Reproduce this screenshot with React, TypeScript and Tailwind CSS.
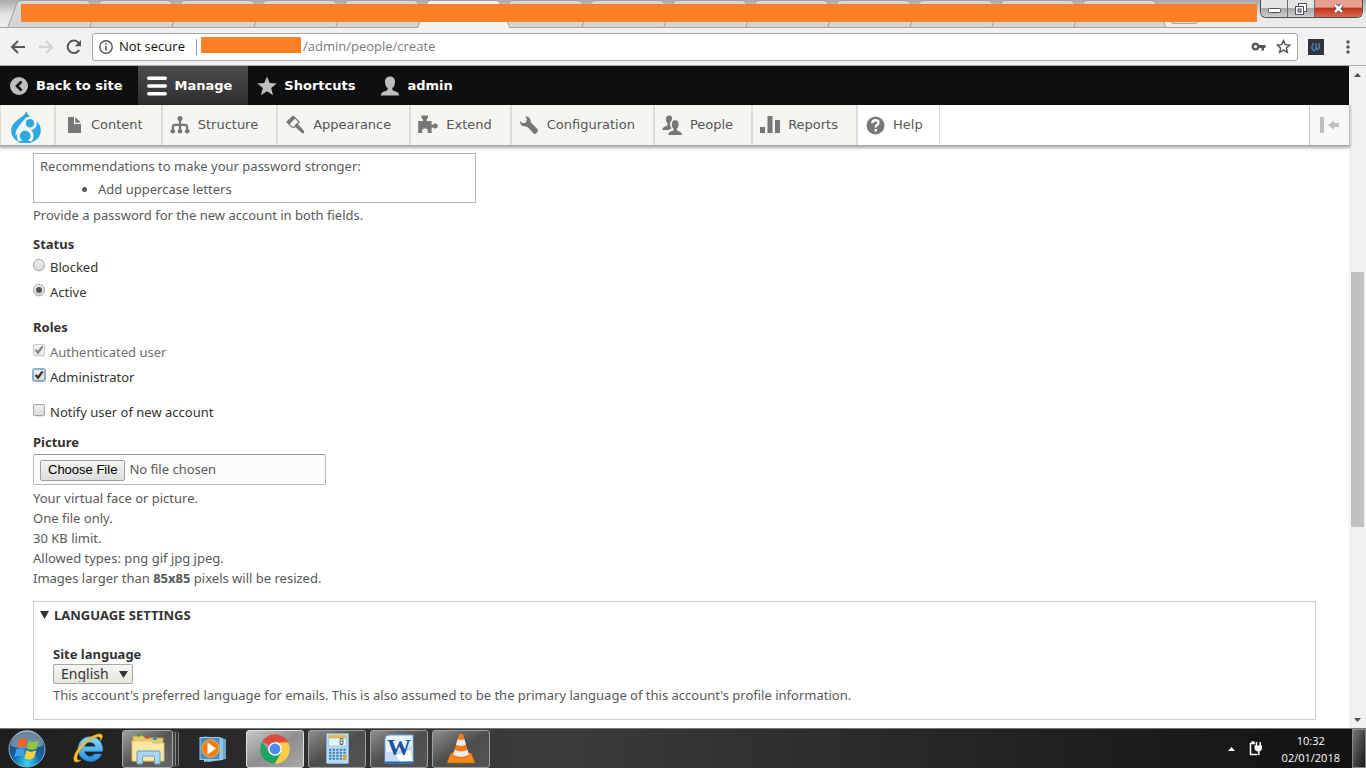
import type { ReactNode } from "react";

const tabs = Array.from({ length: 14 }, (_, i) => i);

function Tab({ active }: { active: boolean }) {
  return (
    <svg width="94" height="28" viewBox="0 0 94 28" className={active ? "relative z-10 -mr-3 shrink-0" : "-mr-3 shrink-0"} aria-hidden="true">
      <path
        d="M0.5 28 L10 3 Q11 0.5 14 0.5 H79 Q82 0.5 83 3 L93 28"
        fill={active ? "#f2f2f2" : "#d6d6d6"}
        stroke="#a0a0a0"
      />
      {!active && <path d="M0 28 H94" stroke="#9b9b9b" strokeWidth="2" />}
    </svg>
  );
}

function TitleBar() {
  return (
    <div className="relative flex h-7 shrink-0 overflow-hidden bg-linear-to-b from-[#a9a9a9] via-[#e4e4e4] to-[#f0f0f0] pl-[7px]">
      {tabs.map((i) => (
        <Tab key={i} active={i === 5} />
      ))}
      <div className="ml-4 mt-4 h-2 w-7 -skew-x-12 rounded-sm border border-[#aaa] bg-[#d8d8d8]" />
      <div className="absolute inset-x-0 bottom-0 h-px bg-[#a3a3a3]" />
      <div className="absolute left-[21px] right-[109px] top-1 z-20 h-[18px] bg-[#ff7f27]" />
      <div className="absolute right-[3px] top-0 z-20 flex h-[18px] overflow-hidden rounded-b-md border border-t-0 border-[#4a4f58]">
        <button aria-label="Minimize" className="flex w-[27px] items-center justify-center border-r border-[#6b6b6b] bg-linear-to-b from-[#e4e4e4] from-45% via-[#a9a9a9] via-50% to-[#cfcfcf]">
          <svg width="13" height="6" viewBox="0 0 13 6" className="mt-1"><rect x="0.5" y="0.5" width="12" height="4" rx="1" fill="#fff" stroke="#4b5160" /></svg>
        </button>
        <button aria-label="Restore" className="flex w-[27px] items-center justify-center border-r border-[#6b6b6b] bg-linear-to-b from-[#e4e4e4] from-45% via-[#a9a9a9] via-50% to-[#cfcfcf]">
          <svg width="12" height="12" viewBox="0 0 12 12" fill="#fff" stroke="#4b5160"><rect x="3.5" y="0.5" width="8" height="8" /><rect x="0.5" y="3.5" width="8" height="8" /><rect x="3" y="6" width="3" height="3" fill="#bbb" /></svg>
        </button>
        <button aria-label="Close" className="flex w-[47px] items-center justify-center bg-linear-to-b from-[#e6a093] from-40% via-[#c2331f] via-50% to-[#d9694c]">
          <svg width="13" height="11" viewBox="0 0 13 11"><path d="M3 2 L10 9 M10 2 L3 9" stroke="#4b3a44" strokeWidth="4.5" /><path d="M3 2 L10 9 M10 2 L3 9" stroke="#fff" strokeWidth="2.6" /></svg>
        </button>
      </div>
    </div>
  );
}

function AddressBar() {
  return (
    <div className="flex h-[38px] shrink-0 items-center border-b border-[#aaa] bg-[#f2f2f2] pl-2 pr-4">
      <button aria-label="Back" className="flex w-7 shrink-0 pl-[2px]">
        <svg width="16" height="16" viewBox="0 0 16 16" fill="none" stroke="#555" strokeWidth="2"><path d="M15 8 H2.5 M8 2 L2 8 L8 14" /></svg>
      </button>
      <button aria-label="Forward" className="flex w-7 shrink-0 pl-[2px]">
        <svg width="16" height="16" viewBox="0 0 16 16" fill="none" stroke="#d2d2d2" strokeWidth="2"><path d="M1 8 H13.5 M8 2 L14 8 L8 14" /></svg>
      </button>
      <button aria-label="Reload" className="flex w-7 shrink-0 pl-[2px]">
        <svg width="16" height="16" viewBox="0 0 16 16"><path d="M13.2 11 A6.2 6.2 0 1 1 12.6 3.8" fill="none" stroke="#555" strokeWidth="2" /><path d="M15 1 V7.2 H8.8 Z" fill="#555" /></svg>
      </button>
      <div className="flex h-7 min-w-0 flex-1 items-center rounded-[3px] border border-[#a9a9a9] bg-white pl-[6px] pr-[6px] font-['Open_Sans',sans-serif] text-[13px] text-[#111]">
        <svg width="14" height="14" viewBox="0 0 14 14" className="mr-[6px] shrink-0"><circle cx="7" cy="7" r="6.2" fill="none" stroke="#555" strokeWidth="1.4" /><path d="M7 6 V10.6 M7 3.2 V4.8" stroke="#555" strokeWidth="1.6" /></svg>
        <span className="shrink-0">Not secure</span>
        <span className="ml-[11px] h-4 w-px shrink-0 bg-[#999]" />
        <span className="mb-1 ml-1 h-4 w-[100px] shrink-0 bg-[#ff7f27]" />
        <input aria-label="Address" defaultValue="/admin/people/create" className="ml-[2px] min-w-0 flex-1 bg-transparent text-[#7b7b7b] outline-none" />
        <button aria-label="Saved passwords" className="mr-[10px] shrink-0">
          <svg width="15" height="10" viewBox="0 0 15 10"><path fillRule="evenodd" d="M4.5 0.5 A4 4 0 1 0 8.3 6 H10.5 V8.5 H13 V6 H14.5 V3 H8.3 A4 4 0 0 0 4.5 0.5 Z M4.5 3 A1.6 1.6 0 1 1 4.49 3 Z" fill="#555" /></svg>
        </button>
        <button aria-label="Bookmark this page" className="shrink-0">
          <svg width="15" height="15" viewBox="0 0 24 24" fill="none" stroke="#555" strokeWidth="2.3"><path d="M12 2.5 L14.9 9 L22 9.7 L16.6 14.4 L18.2 21.4 L12 17.7 L5.8 21.4 L7.4 14.4 L2 9.7 L9.1 9 Z" /></svg>
        </button>
      </div>
      <button aria-label="Extension" className="ml-[10px] shrink-0">
        <svg width="16" height="16" viewBox="0 0 16 16"><rect width="16" height="16" fill="#34323f" /><path d="M5.5 4 Q2.5 9 5.5 11.5 Q8 12 8 8 V4 M8 8 Q8 11 10.5 10 Q12 8 11 4" fill="none" stroke="#4a86b5" strokeWidth="1.4" /></svg>
      </button>
      <button aria-label="Browser menu" className="ml-[22px] shrink-0">
        <svg width="4" height="14" viewBox="0 0 4 14" fill="#555"><circle cx="2" cy="2" r="1.7" /><circle cx="2" cy="7" r="1.7" /><circle cx="2" cy="12" r="1.7" /></svg>
      </button>
    </div>
  );
}

function AdminBar() {
  return (
    <nav aria-label="Administration" className="flex h-[39px] bg-[#0f0f0f] font-['DejaVu_Sans',sans-serif] text-[13px] font-bold text-white">
      <a href="#back" className="flex items-center gap-2 pl-[10px] pr-4">
        <svg width="18" height="18" viewBox="0 0 18 18"><circle cx="9" cy="9" r="9" fill="#bebebe" /><path d="M11.5 4.5 L7 9 L11.5 13.5" fill="none" stroke="#0f0f0f" strokeWidth="2.6" /></svg>
        Back to site
      </a>
      <a href="#manage" className="flex items-center gap-[7px] bg-linear-to-b from-[#4c4c4c] to-[#2f2f2f] pl-[9px] pr-4">
        <svg width="20" height="20" viewBox="0 0 20 20" stroke="#fff" strokeWidth="3.4" strokeLinecap="round"><path d="M1.7 2.2 H18.3 M1.7 10 H18.3 M1.7 17.8 H18.3" /></svg>
        Manage
      </a>
      <a href="#shortcuts" className="flex items-center gap-[7px] pl-[9px] pr-4">
        <svg width="20" height="20" viewBox="0 0 20 20"><path d="M10 0.5 L12.7 7 L19.7 7.4 L14.2 11.9 L16 19.2 L10 15.2 L4 19.2 L5.8 11.9 L0.3 7.4 L7.3 7 Z" fill="#bebebe" /></svg>
        Shortcuts
      </a>
      <a href="#admin" className="flex items-center gap-[7px] pl-[9px] pr-4">
        <svg width="20" height="20" viewBox="0 0 20 20" fill="#bebebe"><path d="M10 0.5 C6.6 0.5 5 2.8 5 6 C5 8.6 6 10.7 7.7 12 C8 13.5 7.4 14.4 5.6 15 C2.6 15.9 1 16.8 0.8 19.5 H19.2 C19 16.8 17.4 15.9 14.4 15 C12.6 14.4 12 13.5 12.3 12 C14 10.7 15 8.6 15 6 C15 2.8 13.4 0.5 10 0.5 Z" /></svg>
        admin
      </a>
    </nav>
  );
}

const menu: { label: string; icon: ReactNode }[] = [
  { label: "Content", icon: <path d="M5 2 H11 V9 H18 V18 H5 Z M12.3 2 L18 7.7 H12.3 Z" /> },
  {
    label: "Structure",
    icon: (
      <>
        <path d="M8.9 4 H11.1 V8.8 H15 Q18.2 8.8 18.2 12 V16 H16 V12.3 Q16 11 14.6 11 H11.1 V16 H8.9 V11 H5.4 Q4 11 4 12.3 V16 H1.8 V12 Q1.8 8.8 5 8.8 H8.9 Z" />
        <circle cx="10" cy="3.6" r="2.5" /><circle cx="2.8" cy="16.3" r="2.3" /><circle cx="10" cy="16.3" r="2.3" /><circle cx="17.2" cy="16.3" r="2.3" />
      </>
    ),
  },
  {
    label: "Appearance",
    icon: (
      <>
        <path d="M1 7 L8 0.5 L10.5 2.4 L3.6 9.4 Z" />
        <path d="M3.8 9 L10 2.8 L14.2 7 L8.8 12.6 L6.5 11.6 Z" fill="none" stroke="#777" strokeWidth="1.2" />
        <path d="M10.4 9.4 L12 8 L19.3 16.2 Q19.5 18.4 17.4 18.4 L9.8 11.6 Z" />
      </>
    ),
  },
  {
    label: "Extend",
    icon: <path d="M3.4 0.6 H10 V3 L8.6 4.5 V6 H13.6 V9.7 H15.4 C16 8 19.8 8 19.8 11 C19.8 14 16 14 15.4 12.5 H13.6 V18 H9.6 C10.6 15 9.5 13.5 7 13.5 C4.5 13.5 3.4 15 4.4 18 H0.2 V6 H5 V4.5 L3.4 3 Z" />,
  },
  {
    label: "Configuration",
    icon: <path d="M6.2 1 C8.8 0.4 11.6 2.4 11.6 5.4 Q11.5 6.5 12.2 7.2 L18.4 13.4 Q19.6 14.8 18.4 16.6 L17.4 17.7 Q15.9 19 14.4 17.8 L8.5 11.6 Q7.8 10.9 6.4 11 C3 11.2 0.8 8.6 1 5.6 L3.6 7.7 L7 7 L7.8 3.4 Z" transform="translate(0 0.5)" />,
  },
  {
    label: "People",
    icon: (
      <>
        <path d="M7.2 0.5 C4.8 0.5 4 2 4 4.2 C4 6.4 4.8 8 5.6 8.8 C5.8 10.2 5.3 10.7 3.6 11.2 C1.4 12 0.4 13 0.3 15 H6.5 C7.4 14 9 13.6 9.8 13.2 C7.5 11 7.6 7.5 9.6 5.4 C10.8 3 10.4 0.5 7.2 0.5 Z" />
        <path d="M13.2 5.2 C10.6 5.2 9.8 7 9.8 9.2 C9.8 11.2 10.6 12.8 11.6 13.7 C11.8 15.2 11.3 15.8 9.6 16.3 C7.5 17 6.4 17.8 6.3 20 H20 C19.9 17.8 18.8 17 16.7 16.3 C15 15.8 14.6 15.2 14.8 13.7 C15.8 12.8 16.6 11.2 16.6 9.2 C16.6 7 15.8 5.2 13.2 5.2 Z" />
      </>
    ),
  },
  { label: "Reports", icon: <path d="M0 12 H5 V18 H0 Z M7.5 1 H12.5 V18 H7.5 Z M15 5 H20 V18 H15 Z" /> },
  {
    label: "Help",
    icon: (
      <>
        <circle cx="10.5" cy="10.5" r="9" />
        <path d="M7.3 8.1 Q7.5 5.3 10.5 5.3 Q13.5 5.3 13.5 7.7 Q13.5 9.1 11.7 10.1 Q10.7 10.8 10.7 12.5 M10.7 13.9 V16.5" fill="none" stroke="#fff" strokeWidth="2.4" />
      </>
    ),
  },
];

function MenuBar() {
  return (
    <nav aria-label="Manage" className="relative flex h-[41px] border-b border-[#a6a6a6] bg-white font-['DejaVu_Sans',sans-serif] text-[13px] text-[#565656] shadow-[0_1px_3px_1px_rgba(0,0,0,0.33)]">
      <a href="#home" aria-label="Home" className="flex w-[56px] items-center border-x border-r-2 border-[#dcdcdc] bg-[#f5f5f2] pl-[10px]">
        <svg width="30" height="32" viewBox="0 0 30 32" className="mt-1">
          <path d="M15.3 0 C14.8 3.2 12 5 8.4 7.5 C4 10.5 0.2 14 0.2 20 C0.2 27 6.5 32 15 32 C23.5 32 29.8 27 29.8 19.5 C29.8 14 26.8 10.6 23 8.2 C19.5 5.8 16.6 4 15.3 0 Z" fill="#2ba9e0" />
          <path d="M12.4 9 C9.5 14 4.5 17 4.4 25 L8 20 L14 17.4 Z" fill="#f5f5f2" />
          <circle cx="19" cy="12.3" r="5.6" fill="#2ba9e0" stroke="#f5f5f2" strokeWidth="2.6" />
          <circle cx="14.2" cy="25" r="6.9" fill="#2ba9e0" stroke="#f5f5f2" strokeWidth="3" />
          <path d="M13 18.4 L15 16.5 L20 19.4 L19 21 Z" fill="#f5f5f2" />
          <path d="M7 30.6 Q14 28.6 21 30.6 L19.5 32 H9 Z" fill="#2ba9e0" />
        </svg>
      </a>
      {menu.map((m) => (
        <a key={m.label} href={`#${m.label.toLowerCase()}`} className="flex items-center gap-2 border-r-2 border-[#dcdcdc] bg-[#f5f5f2] pl-[7px] pr-[18px] last-of-type:border-r last-of-type:bg-white last-of-type:pr-4">
          <svg width="20" height="20" viewBox="0 0 20 20" fill="#777" className="shrink-0">{m.icon}</svg>
          {m.label}
        </a>
      ))}
      <button aria-label="Vertical orientation" className="ml-auto flex w-10 items-center border-l border-[#c8c8c8] bg-[#f6f8f5] pl-[10px]">
        <svg width="20" height="16" viewBox="0 0 20 16" fill="#bfbfbf"><path d="M0 0 H4 V16 H0 Z M8 8 L14 3.5 V6 H19 V10 H14 V12.5 Z" /></svg>
      </button>
    </nav>
  );
}

const boxBase =
  "peer size-3 shrink-0 appearance-none border border-[#a3a3a3] bg-linear-to-b from-[#eeeeee] to-[#dcdcdc] shadow-[0_1px_1px_rgba(0,0,0,0.1)] outline-none";

function Choice({ id, label, type, name, checked, disabled, focused }: { id: string; label: string; type: "radio" | "checkbox"; name?: string; checked?: boolean; disabled?: boolean; focused?: boolean }) {
  return (
    <div className="flex h-[25px] items-center gap-[5px]">
      <span className={disabled ? "relative mb-1 flex opacity-60" : "relative mb-1 flex"}>
        <input
          id={id}
          type={type}
          name={name}
          defaultChecked={checked}
          disabled={disabled}
          className={`${boxBase} ${type === "radio" ? "rounded-full" : "rounded-xs"} ${focused ? "ring-1 ring-[#7fb4f0]" : ""}`}
        />
        {type === "radio" ? (
          <span className="pointer-events-none absolute inset-[3px] hidden rounded-full bg-[#555] peer-checked:block" />
        ) : (
          <svg viewBox="0 0 12 12" className="pointer-events-none absolute inset-0 hidden peer-checked:block" fill="none" stroke="#333" strokeWidth="2.3">
            <path d="M2.6 6 L5 8.6 L9.6 2.4" />
          </svg>
        )}
      </span>
      <label htmlFor={id} className={disabled ? "text-[#6f6f6f]" : ""}>{label}</label>
    </div>
  );
}

function Content() {
  return (
    <main className="flex-1 bg-white pb-2 pl-[33px] pr-[33px] pt-[7px] font-['Noto_Sans',sans-serif] text-[13px] leading-5 text-[#333]">
      <div className="max-w-[443px] border border-[#b5b5b5] px-[6px] pb-[3px] pt-[2px] text-[#595959]">
        <p>Recommendations to make your password stronger:</p>
        <ul className="ml-[58px] mt-[3px] list-disc">
          <li>Add uppercase letters</li>
        </ul>
      </div>
      <p className="mt-[2px] text-[#595959]">Provide a password for the new account in both fields.</p>

      <fieldset className="mt-[9px]">
        <legend className="font-bold">Status</legend>
        <Choice id="blocked" label="Blocked" type="radio" name="status" />
        <Choice id="active" label="Active" type="radio" name="status" checked />
      </fieldset>
      <fieldset className="mt-[13px]">
        <legend className="mb-[2px] font-bold">Roles</legend>
        <Choice id="authenticated" label="Authenticated user" type="checkbox" checked disabled />
        <Choice id="administrator" label="Administrator" type="checkbox" checked focused />
      </fieldset>
      <div className="mt-[10px]">
        <Choice id="notify" label="Notify user of new account" type="checkbox" />
      </div>

      <div className="mt-2">
        <label htmlFor="picture" className="block font-bold">Picture</label>
        <input
          id="picture"
          type="file"
          className="mt-[2px] block h-[31px] w-[293px] rounded-xs border border-[#b8b8b8] border-t-[#999] bg-[#fcfcfa] px-[6px] py-1 text-[13px] leading-5 text-[#595959] file:mr-1 file:h-[21px] file:rounded-[2px] file:border file:border-solid file:border-[#a0a0a0] file:bg-linear-to-b file:from-[#f4f4f4] file:to-[#dddddd] file:px-[7px] file:py-0 file:font-['Liberation_Sans',sans-serif] file:text-[13px] file:leading-[18px] file:text-black"
        />
        <div className="mt-[3px] text-[#595959]">
          <p>Your virtual face or picture.</p>
          <p>One file only.</p>
          <p>30 KB limit.</p>
          <p>Allowed types: png gif jpg jpeg.</p>
          <p>Images larger than <strong>85x85</strong> pixels will be resized.</p>
        </div>
      </div>

      <details open className="mt-[13px] border border-[#ccc]">
        <summary className="flex list-none items-center gap-[5px] px-[6px] pt-[3px] font-bold uppercase">
          <svg width="9" height="8" viewBox="0 0 9 8"><path d="M0 0 H9 L4.5 8 Z" fill="#333" /></svg>
          Language settings
        </summary>
        <div className="px-[19px] pb-[14px] pt-[19px]">
          <label htmlFor="language" className="block font-bold">Site language</label>
          <span className="relative inline-flex align-top">
            <select id="language" className="h-5 w-20 appearance-none rounded-[2px] border border-[#a6a6a6] bg-linear-to-b from-[#f6f6f3] to-[#e7e7df] pb-px pl-[7px] text-sm leading-[17px] text-[#333]">
              <option>English</option>
            </select>
            <svg width="9" height="7" viewBox="0 0 9 7" className="pointer-events-none absolute right-[5px] top-[7px]"><path d="M0 0 H9 L4.5 7 Z" fill="#333" /></svg>
          </span>
          <p className="mt-[1px] text-[#595959]">
            This account's preferred language for emails. This is also assumed to be the primary language of this account's profile information.
          </p>
        </div>
      </details>
    </main>
  );
}

function Scrollbar() {
  return (
    <div className="flex w-[17px] shrink-0 flex-col items-center bg-[#f1f1f1]">
      <button aria-label="Scroll up" className="flex h-[17px] w-full items-center justify-center">
        <svg width="7" height="4" viewBox="0 0 7 4"><path d="M0 4 L3.5 0 L7 4 Z" fill="#505050" /></svg>
      </button>
      <div className="grow-[189]" />
      <div className="w-[13px] grow-[255] bg-[#c1c1c1]" />
      <div className="grow-[184]" />
      <button aria-label="Scroll down" className="flex h-[17px] w-full items-center justify-center">
        <svg width="7" height="4" viewBox="0 0 7 4"><path d="M0 0 L3.5 4 L7 0 Z" fill="#505050" /></svg>
      </button>
    </div>
  );
}

function TaskButton({ label, active, children }: { label: string; active?: boolean; children: ReactNode }) {
  return (
    <button
      aria-label={label}
      className={
        active
          ? "flex h-[38px] w-[58px] items-center justify-center rounded-[3px] border border-[#e2e2e2] bg-linear-to-br from-[#c9c9c9] via-[#8e8e8e] to-[#a8a8a8]"
          : "flex h-[38px] w-[58px] items-center justify-center rounded-[3px] border border-[#a0a0a0] bg-linear-to-br from-[#8e8e8e] via-[#4d4d4d] to-[#555555]"
      }
    >
      {children}
    </button>
  );
}

function Taskbar() {
  return (
    <footer className="flex h-10 shrink-0 items-center border-t border-[#777] bg-linear-to-r from-[#1e1e1e] via-[#3c3c3c] via-40% to-[#111] pl-2 text-white">
      <button aria-label="Start">
        <svg width="38" height="38" viewBox="0 0 38 38">
          <defs>
            <radialGradient id="orb" cx="50%" cy="90%" r="85%"><stop offset="0" stopColor="#35d6ff" /><stop offset="0.45" stopColor="#1468a8" /><stop offset="1" stopColor="#20415f" /></radialGradient>
          </defs>
          <circle cx="19" cy="19" r="18" fill="url(#orb)" stroke="#8fb2c7" />
          <path d="M3 16 A16 16 0 0 1 35 16 Q19 21 3 16 Z" fill="#fff" opacity="0.35" />
          <path d="M11 9 Q15 7 19.5 10 L17.6 18 Q13 15.5 8.8 17.8 Z" fill="#f1622c" />
          <path d="M20.8 10.5 Q25.5 13.5 31 10.5 L28.8 18.5 Q23 21.5 18.8 18.6 Z" fill="#8cc63f" />
          <path d="M8.4 19.3 Q13 17 17.2 19.6 L15.2 27.3 Q11 24.8 6.3 27.3 Z" fill="#3d9fe8" />
          <path d="M18.4 20.3 Q23 23 28.3 20.2 L26 28 Q21 31 16.3 28 Z" fill="#ffd13b" />
        </svg>
      </button>
      <button aria-label="Internet Explorer" className="ml-[26px]">
        <svg width="34" height="34" viewBox="0 0 34 34" fill="none">
          <defs>
            <linearGradient id="ie" x1="0" y1="0" x2="0" y2="1"><stop offset="0" stopColor="#8fe0fb" /><stop offset="1" stopColor="#1f8fdc" /></linearGradient>
          </defs>
          <path fillRule="evenodd" d="M18 4.5 A12.5 12.5 0 1 0 29.8 22 H22.5 A5.4 5.4 0 0 1 12.6 19.5 H30.5 A12.5 12.5 0 0 0 18 4.5 Z M12.6 14.5 A5.6 5.6 0 0 1 23.4 14.5 Z" fill="url(#ie)" stroke="#1c7fc9" strokeWidth="0.6" />
          <path d="M5 30 C-2 31 3 16 15 8 C22 2 30 0 30.5 4 Q30.5 6 28.5 9 Q29 4 25 5 C16 7 4 20 5 27 Q6 29 9 28 Q7 30 5 30 Z" fill="#fdc52c" stroke="#d98f12" strokeWidth="0.6" />
        </svg>
      </button>
      <div className="ml-4 flex">
        <button aria-label="Windows Explorer" className="flex h-[38px] w-[51px] items-center justify-center rounded-[3px] border border-[#a9a9a9] bg-linear-to-br from-[#a2a2a2] via-[#555] to-[#666]">
          <svg width="34" height="32" viewBox="0 0 34 32">
            <path d="M2 3 H12 L14 5 H32 V28 H2 Z" fill="#e8c968" stroke="#c9a443" />
            <rect x="6" y="1.5" width="3" height="2" fill="#1fa83a" /><rect x="14" y="3.5" width="4" height="2" fill="#d8452e" /><rect x="22" y="5" width="4" height="2" fill="#2b8be0" />
            <path d="M1 8 H20 L22 10 H33 V28 H1 Z" fill="#f9e8a4" stroke="#dcbf65" />
            <path d="M6 31 V19 Q6 18 7 18 H28 Q29 18 29 19 V31 H23.5 V24.5 Q23.5 23 22 23 H13 Q11.5 23 11.5 24.5 V31 Z" fill="#a9d7f2" stroke="#5e9fca" />
          </svg>
        </button>
        <div className="my-px w-[3px] rounded-r-sm border-r border-[#888] bg-[#444]" />
        <div className="my-px w-[3px] rounded-r-sm border-r border-[#777] bg-[#333]" />
      </div>
      <button aria-label="Media Player" className="ml-5">
        <svg width="28" height="28" viewBox="0 0 28 28">
          <path d="M9 2 L27 4 V24 L9 27 Z" fill="#6ba6cf" /><path d="M5 1.5 L24 3 V25 L5 27 Z" fill="#8fc4e6" /><rect x="1" y="2.5" width="20" height="22" fill="#4c8fc3" stroke="#9dcbe8" />
          <circle cx="11.5" cy="13.5" r="8.7" fill="#f07f13" stroke="#f9b45b" /><path d="M8.5 7.5 L17 13.5 L8.5 19.5 Z" fill="#fff" />
        </svg>
      </button>
      <div className="ml-[19px] flex gap-1">
        <TaskButton label="Chrome" active>
          <svg width="30" height="30" viewBox="0 0 30 30">
            <path d="M15 15 L2.2 7.6 A14.8 14.8 0 0 1 27.8 7.6 Z" fill="#dd4b3e" /><path d="M2.2 7.6 A14.8 14.8 0 0 0 15 29.8 L21 18.5 L15 15 L9 18.5 Z" fill="#1da462" /><path d="M27.9 7.8 A14.8 14.8 0 0 1 14.8 29.8 L21.2 18.5 L15 8.2 V7.8 Z" fill="#ffcd46" />
            <path d="M15 8 H28" stroke="#dd4b3e" strokeWidth="1" />
            <circle cx="15" cy="15" r="6.8" fill="#fff" /><circle cx="15" cy="15" r="5.4" fill="#4a8af4" />
          </svg>
        </TaskButton>
        <TaskButton label="Calculator">
          <svg width="23" height="31" viewBox="0 0 23 31">
            <rect x="0.5" y="0.5" width="22" height="30" rx="1" fill="#b9d9f0" stroke="#7fb2d6" /><rect x="2.5" y="2" width="18" height="3" fill="#f6b73c" /><rect x="2.5" y="5" width="18" height="8" fill="#e6f2fa" stroke="#8db4cf" strokeWidth="0.6" />
            <text x="13" y="12" fontSize="8" fontFamily="DejaVu Sans Mono, monospace" fill="#345">0</text>
            {[16, 19, 22, 25].map((y) => (
              <path key={y} d={`M3 ${y + 0.7} H20`} stroke="#3e83b5" strokeWidth="2" strokeDasharray="2.4 1.2" />
            ))}
            <rect x="17.5" y="22" width="3" height="5" fill="#f39a1f" />
          </svg>
        </TaskButton>
        <TaskButton label="Word">
          <svg width="30" height="30" viewBox="0 0 30 30">
            <path d="M5 1 H29 V29 H1 V5 Q1 1 5 1 Z" fill="#e9f3fc" stroke="#6fa3dc" /><path d="M1 18 Q12 20 29 10 V29 H1 Z" fill="#c5dcf4" />
            <path d="M11 21 L27 15 L29 27 L16 29 Z" fill="#fff" stroke="#a4bfdd" strokeWidth="0.7" /><path d="M1 28.5 H29" stroke="#2769bd" strokeWidth="2" />
            <text x="3" y="21" fontFamily="Liberation Serif, serif" fontWeight="bold" fontSize="24" fill="#1e4fa3">W</text>
          </svg>
        </TaskButton>
        <TaskButton label="VLC">
          <svg width="28" height="31" viewBox="0 0 28 31">
            <path d="M4 20 H24 L27.5 28.5 V30 H0.5 V28.5 Z" fill="#f58a1b" stroke="#c66508" strokeWidth="0.8" />
            <path d="M12 1.5 Q14 0 16 1.5 L22.5 23.5 Q14 28 5.5 23.5 Z" fill="#f47b13" />
            <path d="M10.6 6.3 Q14 7.8 17.4 6.3 L19 11.8 Q14 14 9 11.8 Z M7.5 16.8 Q14 20 20.5 16.8 L22 21.8 Q14 26 6 21.8 Z" fill="#ececec" />
          </svg>
        </TaskButton>
      </div>
      <div className="ml-auto flex h-full items-center font-['Open_Sans',sans-serif] text-[11px] leading-[17px]">
        <button aria-label="Show hidden icons" className="mr-[14px]">
          <svg width="7" height="4" viewBox="0 0 7 4"><path d="M0 4 L3.5 0 L7 4 Z" fill="#fff" /></svg>
        </button>
        <svg width="14" height="15" viewBox="0 0 14 15" fill="none" stroke="#fff" strokeWidth="1.5"><path d="M6 2.5 H1.5 V13.5 H8.5 M2.5 1 H5.5" /><path d="M5.5 4.5 H13 V7 Q13 10.4 9.5 10.4 Q5.5 10.4 5.5 7 Z" fill="#fff" stroke="none" /><path d="M7.5 1 V5 M11.2 1 V5 M9.8 9 V14" /></svg>
        <div className="ml-[19px] text-center">
          <div>10:32</div>
          <div>02/01/2018</div>
        </div>
        <button aria-label="Show desktop" className="ml-3 h-full w-[14px] border border-[#888] bg-linear-to-br from-[#777] to-[#1a1a1a]" />
      </div>
    </footer>
  );
}

export default function App() {
  return (
    <div className="flex min-h-screen flex-col bg-white">
      <TitleBar />
      <AddressBar />
      <div className="flex flex-1">
        <div className="flex min-w-0 flex-1 flex-col">
          <AdminBar />
          <MenuBar />
          <Content />
        </div>
        <Scrollbar />
      </div>
      <Taskbar />
    </div>
  );
}
